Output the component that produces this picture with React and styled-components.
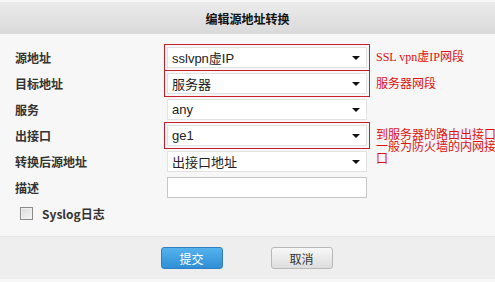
import React from "react";
import styled, { createGlobalStyle } from "styled-components";

const GlobalStyle = createGlobalStyle`
  html, body {
    margin: 0;
    padding: 0;
    background: #f7f7f7;
    overflow: hidden;
  }
  body {
    font-family: "Liberation Sans", "Noto Sans CJK SC", sans-serif;
    font-size: 12px;
    color: #333;
  }
`;

const Dialog = styled.div`
  width: 495px;
  height: 282px;
  display: flex;
  flex-direction: column;
  background: #f7f7f7;
`;

const Header = styled.div`
  margin-top: 2px;
  height: 32px;
  display: flex;
  align-items: center;
  justify-content: center;
  background: linear-gradient(#ebebeb, #d9d9d9);
  font-family: "Noto Sans CJK SC", sans-serif;
  font-weight: bold;
  font-size: 12px;
  color: #111;
`;

const Form = styled.div`
  flex: 1;
  padding: 10px 0 0 15px;
  display: flex;
  flex-direction: column;
`;

const Row = styled.div`
  height: 26px;
  display: flex;
  align-items: center;
`;

const Label = styled.div`
  width: 152px;
  flex: none;
  font-family: "Noto Sans CJK SC", sans-serif;
  font-weight: bold;
  font-size: 12px;
  color: #333;
`;

const Field = styled.div`
  position: relative;
  width: 200px;
  height: 21px;
  flex: none;
  box-sizing: border-box;
  background: #fff;
  border: 1px solid ${(p) => (p.input ? "#c6c6c6" : "#e2e2e2")};
  display: flex;
  align-items: center;
  padding-left: 4px;
  font-family: "Liberation Sans", "Noto Sans CJK SC", sans-serif;
  font-size: 13px;
  color: #222;
  outline: ${(p) => (p.marked ? "1.5px solid #c8202a" : "none")};
  outline-offset: 2px;
`;

const Arrow = styled.span`
  position: absolute;
  right: 6px;
  top: 8px;
  width: 0;
  height: 0;
  border-left: 4px solid transparent;
  border-right: 4px solid transparent;
  border-top: 4px solid #111;
`;

const Note = styled.div`
  align-self: ${(p) => (p.top ? "flex-start" : "center")};
  margin-top: ${(p) => (p.top ? "6px" : "0")};
  margin-left: 9px;
  width: 120px;
  flex: none;
  font-family: ${(p) =>
    p.serif ? '"Liberation Serif", "Noto Sans CJK SC", serif' : '"Noto Sans CJK SC", sans-serif'};
  font-size: 12px;
  line-height: 12px;
  color: #e01010;
  white-space: normal;
  word-break: break-all;
`;

const CheckRow = styled.label`
  height: 26px;
  display: flex;
  align-items: center;
  padding-left: 5px;
  gap: 9px;
  font-family: "Noto Sans CJK SC", sans-serif;
  font-weight: bold;
  font-size: 12px;
  color: #333;
`;

const Box = styled.span`
  width: 11px;
  height: 11px;
  border: 1px solid #8a8a8a;
  background: linear-gradient(135deg, #dcdcdc, #f6f6f6);
  box-shadow: inset 0 0 0 1px #f0f0f0;
`;

const Footer = styled.div`
  height: 42px;
  margin-bottom: 3px;
  background: #eeeeee;
  border-top: 1px solid #e6e6e6;
  display: flex;
  align-items: center;
  justify-content: center;
  gap: 48px;
  padding-right: 2px;
`;

const Button = styled.button`
  width: 62px;
  height: 22px;
  border-radius: 3px;
  font-family: "Noto Sans CJK SC", sans-serif;
  font-size: 12px;
  padding: 0;
  cursor: pointer;
  border: 1px solid ${(p) => (p.primary ? "#2f7fc0" : "#b8b8b8")};
  color: ${(p) => (p.primary ? "#fff" : "#333")};
  background: ${(p) =>
    p.primary
      ? "linear-gradient(#55b2ec, #2f8fd6)"
      : "linear-gradient(#f7f7f7, #dddddd)"};
`;

const rows = [
  { label: "源地址", value: "sslvpn虚IP", marked: true, note: "SSL vpn虚IP网段", serif: true },
  { label: "目标地址", value: "服务器", marked: true, note: "服务器网段" },
  { label: "服务", value: "any" },
  { label: "出接口", value: "ge1", marked: true, note: "到服务器的路由出接口一般为防火墙的内网接口", top: true },
  { label: "转换后源地址", value: "出接口地址" },
];

export default function App() {
  return (
    <Dialog>
      <GlobalStyle />
      <Header>编辑源地址转换</Header>
      <Form>
        {rows.map((r) => (
          <Row key={r.label}>
            <Label>{r.label}</Label>
            <Field marked={r.marked}>
              {r.value}
              <Arrow />
            </Field>
            {r.note && (
              <Note serif={r.serif} top={r.top}>
                {r.note}
              </Note>
            )}
          </Row>
        ))}
        <Row>
          <Label>描述</Label>
          <Field input />
        </Row>
        <CheckRow>
          <Box />
          Syslog日志
        </CheckRow>
      </Form>
      <Footer>
        <Button primary>提交</Button>
        <Button>取消</Button>
      </Footer>
    </Dialog>
  );
}
